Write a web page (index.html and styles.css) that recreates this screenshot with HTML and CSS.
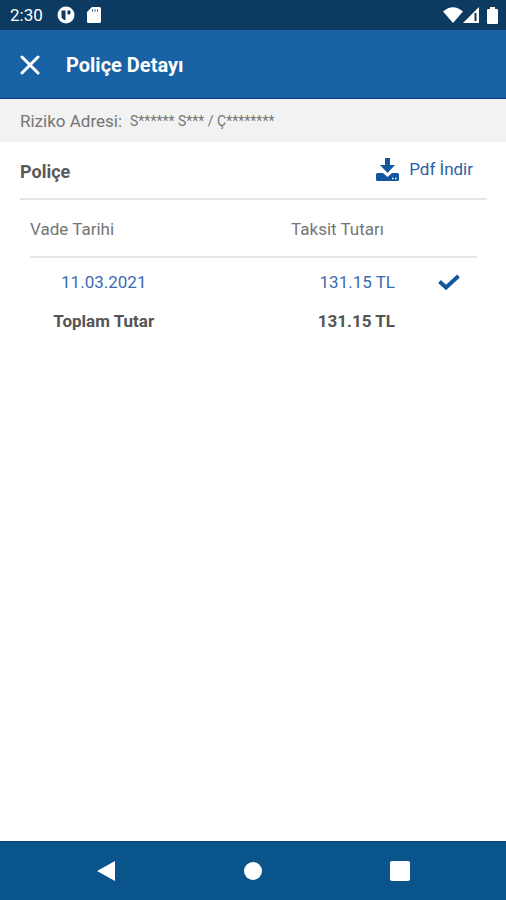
FILE: index.html
```html
<!DOCTYPE html>
<html lang="tr">
<head>
    <meta charset="UTF-8">
    <meta name="viewport" content="width=device-width, initial-scale=1.0">
    <title>Poliçe Detayı</title>
    <link rel="stylesheet" href="styles.css">
</head>
<body>
    <div class="status-bar">
        <span class="clock">2:30</span>
        <svg class="status-app" width="18" height="18" viewBox="0 0 18 18">
            <circle cx="9" cy="9" r="8.5" fill="#fff"/>
            <path d="M4.500 4.500h4v9.500H7L4.500 11.500zM10.500 4.500h3v3l-1 1h-2z" fill="#0d3a61"/>
        </svg>
        <svg width="14" height="16" viewBox="0 0 14 16">
            <path d="M5 0h7.500Q14 0 14 1.500v13Q14 16 12.500 16h-11Q0 16 0 14.500V5z" fill="#fff"/>
            <path d="M5.500 2.500v2M8 2.500v2M10.500 2.500v2" stroke="#0d3a61" stroke-width="1"/>
        </svg>
        <div class="status-right">
            <svg width="20" height="16" viewBox="0 0 20 16">
                <path d="M0 4.500Q10-4 20 4.500L10 16z" fill="#fff"/>
            </svg>
            <svg width="16" height="16" viewBox="0 0 16 16">
                <path d="M16 0v16H0z" fill="#fff"/>
                <path d="M12.500 6v8" stroke="#0d3a61" stroke-width="2"/>
            </svg>
            <svg class="battery" width="11" height="17" viewBox="0 0 11 17">
                <path d="M3 0h5v2h2q1 0 1 1v13q0 1-1 1H1q-1 0-1-1V3q0-1 1-1h2z" fill="#fff"/>
            </svg>
        </div>
    </div>

    <header class="app-bar">
        <button class="close" type="button" aria-label="Kapat">
            <svg width="20" height="20" viewBox="0 0 20 20">
                <path d="M2 2l16 16M18 2L2 18" stroke="#fff" stroke-width="3" stroke-linecap="round"/>
            </svg>
        </button>
        <h1>Poliçe Detayı</h1>
    </header>

    <div class="address">
        <span>Riziko Adresi:</span>
        <span class="address-value">S****** S*** / Ç********</span>
    </div>

    <main>
        <div class="section-head">
            <h2>Poliçe</h2>
            <a class="download" href="#">
                <svg width="23" height="23" viewBox="0 0 23 23" fill="#1257a0">
                    <path d="M9 0h5v7h5l-7.500 8L4 7h5z"/>
                    <path d="M1.500 15h5.500l4.500 4 4.500-4h5.500Q23 15 23 16.500v5Q23 23 21.500 23h-20Q0 23 0 21.500v-5Q0 15 1.500 15z"/>
                    <path d="M16 20.500h1.500M19 20.500h1.500" stroke="#fff" stroke-width="1.500"/>
                </svg>
                Pdf İndir
            </a>
        </div>

        <table class="installments">
            <thead>
                <tr>
                    <th class="date">Vade Tarihi</th>
                    <th class="amount">Taksit Tutarı</th>
                    <th class="state"></th>
                </tr>
            </thead>
            <tbody>
                <tr class="paid">
                    <td>11.03.2021</td>
                    <td class="amount">131.15 TL</td>
                    <td class="state">
                        <svg width="22" height="16" viewBox="0 0 22 16">
                            <path d="M1.500 7.500l6.500 6L20.500 2" fill="none" stroke="#1257a0" stroke-width="4"/>
                        </svg>
                    </td>
                </tr>
                <tr class="sum">
                    <td>Toplam Tutar</td>
                    <td class="amount">131.15 TL</td>
                    <td></td>
                </tr>
            </tbody>
        </table>
    </main>

    <nav class="nav-bar">
        <button type="button" aria-label="Geri">
            <svg width="18" height="20" viewBox="0 0 18 20"><path d="M18 0v20L0 10z" fill="#fff"/></svg>
        </button>
        <button type="button" aria-label="Ana ekran">
            <svg width="18" height="18" viewBox="0 0 18 18"><circle cx="9" cy="9" r="9" fill="#fff"/></svg>
        </button>
        <button type="button" aria-label="Son uygulamalar">
            <svg width="20" height="20" viewBox="0 0 20 20"><rect width="20" height="20" rx="2" fill="#fff"/></svg>
        </button>
    </nav>
</body>
</html>
```
FILE: styles.css
```css
* {
    box-sizing: border-box;
}
body {
    margin: 0;
    min-height: 100vh;
    display: flex;
    flex-direction: column;
    background-color: #fff;
    color: #757575;
    font-family: Roboto, sans-serif;
    font-size: 17px;
    line-height: 24px;
}
svg {
    display: block;
}
h1, h2 {
    margin: 0;
}
button {
    padding: 0;
    border: none;
    background: none;
    cursor: pointer;
}
.status-bar {
    display: flex;
    align-items: center;
    height: 30px;
    padding: 0 8px 0 10px;
    background-color: #0d3a61;
    color: #fff;
}
.status-app {
    margin: 0 12px 0 14px;
}
.status-right {
    display: flex;
    align-items: center;
    margin-left: auto;
}
.battery {
    margin-left: 8px;
}
.app-bar {
    display: flex;
    align-items: center;
    gap: 26px;
    height: 69px;
    padding: 2px 20px 0;
    background-color: #1862a5;
    border-bottom: 1px solid #073a8c;
    color: #fff;
}
h1 {
    font-size: 20px;
    font-weight: 700;
}
.address {
    display: flex;
    align-items: center;
    gap: 8px;
    height: 43px;
    padding: 0 20px;
    background-color: #f2f2f2;
}
.address-value {
    font-size: 14px;
}
main {
    flex: 1;
    padding: 0 19px 0 20px;
}
.section-head {
    display: flex;
    align-items: flex-end;
    justify-content: space-between;
    height: 58px;
    padding: 0 14px 14px 0;
    border-bottom: 2px solid #e4e5e6;
}
h2 {
    color: #5a5a5a;
    font-size: 18px;
    font-weight: 700;
}
.download {
    display: flex;
    align-items: center;
    gap: 10px;
    padding-bottom: 3px;
    color: #2b62a8;
    text-decoration: none;
}
.installments {
    width: calc(100% - 20px);
    margin: 0 10px;
    border-collapse: collapse;
    table-layout: fixed;
}
.installments th {
    height: 57px;
    padding: 2px 0 0;
    border-bottom: 2px solid #e4e5e6;
    font-weight: 400;
    text-align: left;
}
.installments td {
    padding: 0;
    text-align: center;
}
.installments .date {
    width: 33%;
}
.installments .amount {
    padding-right: 26px;
    text-align: right;
}
.installments th.amount {
    padding-right: 37px;
}
.installments .state {
    width: 56px;
}
.state svg {
    margin: 0 auto;
}
.paid td {
    height: 48px;
    color: #3b6cb0;
}
.sum td {
    height: 32px;
    color: #555;
    font-weight: 700;
}
.nav-bar {
    display: grid;
    grid-template-columns: repeat(3, 1fr);
    height: 59px;
    padding: 0 33px;
    background-color: #08548b;
    border-top: 1px solid #07427a;
}
.nav-bar button {
    display: flex;
    align-items: center;
    justify-content: center;
}
```
